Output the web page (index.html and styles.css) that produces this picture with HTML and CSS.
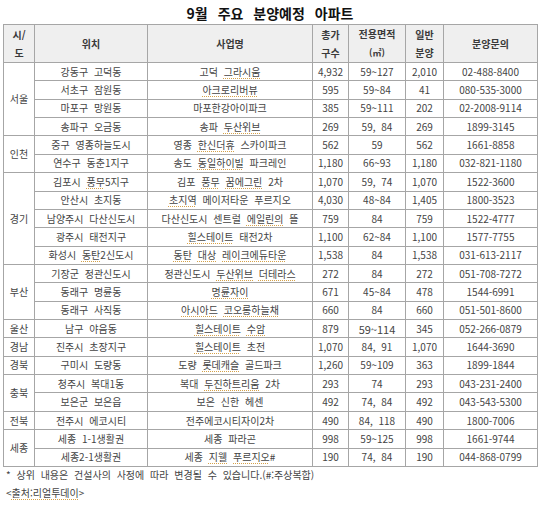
FILE: index.html
```html
<!DOCTYPE html>
<html lang="ko">
<head>
<meta charset="utf-8">
<link rel="stylesheet" href="styles.css">
</head>
<body>
<div class="page">
  <h1 class="title">9월 주요 분양예정 아파트</h1>
  <table class="grid">
    <colgroup>
      <col class="c-sido"><col class="c-loc"><col class="c-name"><col class="c-total"><col class="c-area"><col class="c-gen"><col class="c-tel">
    </colgroup>
    <thead>
      <tr>
        <th>시/<br>도</th>
        <th>위치</th>
        <th>사업명</th>
        <th>총가<br>구수</th>
        <th>전용면적<br><span class="unit">(㎡)</span></th>
        <th>일반<br>분양</th>
        <th>분양문의</th>
      </tr>
    </thead>
    <tbody>
      <tr><td rowspan="4" class="sido">서울</td><td>강동구 고덕동</td><td>고덕 <span class="sp">그라시움</span></td><td>4,932</td><td>59~127</td><td>2,010</td><td>02-488-8400</td></tr>
      <tr><td>서초구 잠원동</td><td><span class="sp">아크로리버뷰</span></td><td>595</td><td>59~84</td><td>41</td><td>080-535-3000</td></tr>
      <tr><td>마포구 망원동</td><td>마포한강아이파크</td><td>385</td><td>59~111</td><td>202</td><td>02-2008-9114</td></tr>
      <tr><td>송파구 오금동</td><td>송파 <span class="sp">두산위브</span></td><td>269</td><td>59, 84</td><td>269</td><td>1899-3145</td></tr>
      <tr><td rowspan="2" class="sido">인천</td><td>중구 영종하늘도시</td><td>영종 <span class="sp">한신더휴</span> 스카이파크</td><td>562</td><td>59</td><td>562</td><td>1661-8858</td></tr>
      <tr><td>연수구 동춘1지구</td><td>송도 <span class="sp">동일하이빌</span> 파크레인</td><td>1,180</td><td>66~93</td><td>1,180</td><td>032-821-1180</td></tr>
      <tr><td rowspan="5" class="sido">경기</td><td>김포시 <span class="sp">풍무</span>5지구</td><td>김포 <span class="sp">풍무</span> <span class="sp">꿈에그린</span> 2차</td><td>1,070</td><td>59, 74</td><td>1,070</td><td>1522-3600</td></tr>
      <tr><td>안산시 초지동</td><td><span class="sp">초지역</span> 메이저타운 푸르지오</td><td>4,030</td><td>48~84</td><td>1,405</td><td>1800-3523</td></tr>
      <tr><td>남양주시 다산신도시</td><td>다산신도시 센트럴 <span class="sp">에일린의</span> 뜰</td><td>759</td><td>84</td><td>759</td><td>1522-4777</td></tr>
      <tr><td>광주시 태전지구</td><td><span class="sp">힐스테이트</span> 태전2차</td><td>1,100</td><td>62~84</td><td>1,100</td><td>1577-7755</td></tr>
      <tr><td>화성시 <span class="sp">동탄</span>2신도시</td><td><span class="sp">동탄</span> <span class="sp">대상</span> <span class="sp">레이크에듀타운</span></td><td>1,538</td><td>84</td><td>1,538</td><td>031-613-2117</td></tr>
      <tr><td rowspan="3" class="sido">부산</td><td>기장군 정관신도시</td><td>정관신도시 <span class="sp">두산위브</span> <span class="sp">더테라스</span></td><td>272</td><td>84</td><td>272</td><td>051-708-7272</td></tr>
      <tr><td>동래구 명륜동</td><td><span class="sp">명륜자이</span></td><td>671</td><td>45~84</td><td>478</td><td>1544-6991</td></tr>
      <tr><td>동래구 사직동</td><td><span class="sp">아시아드</span> <span class="sp">코오롱하늘채</span></td><td>660</td><td>84</td><td>660</td><td>051-501-8600</td></tr>
      <tr><td class="sido">울산</td><td>남구 야음동</td><td><span class="sp">힐스테이트</span> <span class="sp">수암</span></td><td>879</td><td class="big">59~114</td><td>345</td><td>052-266-0879</td></tr>
      <tr><td class="sido">경남</td><td>진주시 초장지구</td><td><span class="sp">힐스테이트</span> 초전</td><td>1,070</td><td>84, 91</td><td>1,070</td><td>1644-3690</td></tr>
      <tr><td class="sido">경북</td><td>구미시 도량동</td><td>도량 <span class="sp">롯데캐슬</span> 골드파크</td><td>1,260</td><td>59~109</td><td>363</td><td>1899-1844</td></tr>
      <tr><td rowspan="2" class="sido">충북</td><td>청주시 복대1동</td><td>복대 <span class="sp">두진하트리움</span> 2차</td><td>293</td><td>74</td><td>293</td><td>043-231-2400</td></tr>
      <tr><td>보은군 보은읍</td><td>보은 신한 헤센</td><td>492</td><td>74, 84</td><td>492</td><td>043-543-5300</td></tr>
      <tr><td class="sido">전북</td><td>전주시 에코시티</td><td>전주에코시티자이2차</td><td>490</td><td>84, 118</td><td>490</td><td>1800-7006</td></tr>
      <tr><td rowspan="2" class="sido">세종</td><td>세종 1-1생활권</td><td>세종 파라곤</td><td>998</td><td>59~125</td><td>998</td><td>1661-9744</td></tr>
      <tr><td>세종2-1생활권</td><td>세종 <span class="sp">지웰</span> <span class="sp">푸르지오</span>#</td><td>190</td><td>74, 84</td><td>190</td><td>044-868-0799</td></tr>
    </tbody>
  </table>
  <p class="note">* 상위 내용은 건설사의 사정에 따라 변경될 수 있습니다.(#:주상복합)</p>
  <p class="source">&lt;<span class="sp">출처:리얼투데이</span>&gt;</p>
</div>
</body>
</html>
```

FILE: styles.css
```css
html, body {
  margin: 0;
  padding: 0;
  background: #ffffff;
}

.page {
  width: 540px;
  height: 509px;
  font-family: "Noto Sans CJK KR", "Noto Sans", sans-serif;
  color: #444444;
  overflow: hidden;
}

.title {
  margin: 0;
  height: 24px;
  line-height: 26px;
  font-size: 14px;
  font-weight: 700;
  color: #111;
  text-align: center;
  word-spacing: 6px;
}

.grid {
  margin-left: 3px;
  width: 534px;
  border-collapse: collapse;
  table-layout: fixed;
  font-size: 10px;
}

.c-sido { width: 31px; }
.c-loc { width: 113px; }
.c-name { width: 165px; }
.c-total { width: 36px; }
.c-area { width: 57px; }
.c-gen { width: 38px; }
.c-tel { width: 94px; }

.grid th,
.grid td {
  border: 1px solid #a6a6a6;
  padding: 0;
  text-align: center;
  white-space: nowrap;
  overflow: hidden;
}

.grid th {
  height: 37px;
  background: #efefef;
  font-weight: 700;
  color: #3a3a3a;
  line-height: 18px;
  font-size: 10px;
}

.grid th .unit {
  font-size: 9px;
}

.grid td {
  height: 17.36px;
  line-height: 14px;
  word-spacing: 3px;
}

.grid td.sido {
  word-spacing: 0;
}

.grid td.big {
  font-size: 11px;
}

.sp {
  text-decoration: underline dotted #d6a24a;
  text-underline-offset: 2px;
}

.note {
  margin: 0 0 0 6px;
  font-size: 10px;
  line-height: 16px;
  word-spacing: 3px;
}

.source {
  margin: 2px 0 0 6px;
  font-size: 10px;
  line-height: 16px;
}
```
